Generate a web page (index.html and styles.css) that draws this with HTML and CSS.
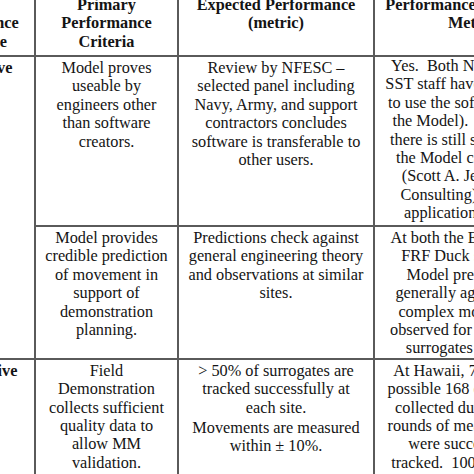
FILE: index.html
```html
<!DOCTYPE html>
<html lang="en">
<head>
<meta charset="utf-8">
<title>Performance Objectives</title>
<link rel="stylesheet" href="styles.css">
</head>
<body>
<div class="viewport">
<table class="perf">
  <colgroup>
    <col class="c-type">
    <col class="c-crit">
    <col class="c-exp">
    <col class="c-act">
  </colgroup>
  <thead>
    <tr class="r-head">
      <th>Type of<br>Performance<br>Objective</th>
      <th>Primary<br>Performance<br>Criteria</th>
      <th>Expected Performance<br>(metric)</th>
      <th class="act">Performance Objective<br>Met?</th>
    </tr>
  </thead>
  <tbody>
    <tr class="r-a">
      <td rowspan="2" class="type">Qualitative</td>
      <td>Model proves<br>useable by<br>engineers other<br>than software<br>creators.</td>
      <td>Review by NFESC –<br>selected panel including<br>Navy, Army, and support<br>contractors concludes<br>software is transferable to<br>other users.</td>
      <td class="act first">Yes.&nbsp; Both NFESC and<br>SST staff have been able<br>to use the software (i.e.,<br>the Model).&nbsp; However,<br>there is still some work<br>the Model calibration<br>(Scott A. Jenkins of<br>Consulting) for new<br>application testing.</td>
    </tr>
    <tr class="r-b">
      <td>Model provides<br>credible prediction<br>of movement in<br>support of<br>demonstration<br>planning.</td>
      <td>Predictions check against<br>general engineering theory<br>and observations at similar<br>sites.</td>
      <td class="act">At both the Ewa Beach<br>FRF Duck sites, the<br>Model predictions<br>generally agreed with<br>complex movements<br>observed for individual<br>surrogates overall.</td>
    </tr>
    <tr class="r-c">
      <td class="type">Quantitative</td>
      <td>Field<br>Demonstration<br>collects sufficient<br>quality data to<br>allow MM<br>validation.</td>
      <td><div>&gt; 50% of surrogates are<br>tracked successfully at<br>each site.</div><div class="next">Movements are measured<br>within ± 10%.</div></td>
      <td class="act">At Hawaii, 75 out of a<br>possible 168 data points<br>collected during three<br>rounds of measurement,<br>were successfully<br>tracked.&nbsp; 100% at FRF.</td>
    </tr>
  </tbody>
</table>
</div>
</body>
</html>
```

FILE: styles.css
```css
html, body {
  margin: 0;
  padding: 0;
  background: #ffffff;
}

.viewport {
  width: 474px;
  height: 474px;
  overflow: hidden;
}

.perf {
  margin-left: -89px;
  margin-top: -8px;
  width: 646px;
  table-layout: fixed;
  border-collapse: collapse;
  border-spacing: 0;
  font-family: "Liberation Serif", "Times New Roman", serif;
  font-size: 16.3px;
  line-height: 18.4px;
  color: #141414;
}

.c-type { width: 123px; }
.c-crit { width: 143px; }
.c-exp  { width: 196px; }
.c-act  { width: 184px; }

.perf th,
.perf td {
  border: 2px solid #5a5a5a;
  padding: 2px 2px 0 2px;
  text-align: center;
  vertical-align: top;
  white-space: nowrap;
}

.perf th {
  font-weight: bold;
}

.perf .type {
  font-weight: bold;
}

.perf td.first {
  padding-top: 0;
}

.r-head th { height: 59px; }
.r-a td { height: 166px; }
.r-b td { height: 128px; }
.r-c td { height: 140px; }

.next {
  margin-top: 2px;
}
```
